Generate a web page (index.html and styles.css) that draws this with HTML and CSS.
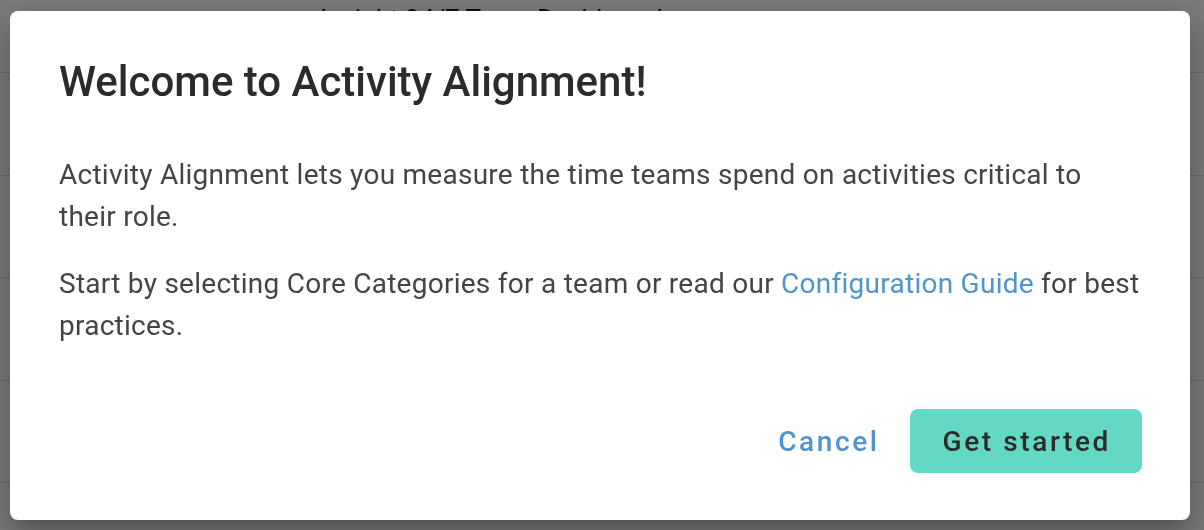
FILE: index.html
```html
<!DOCTYPE html>
<html>
<head>
<meta charset="utf-8">
<link rel="stylesheet" href="styles.css">
</head>
<body>
<div class="page">
  <div class="page-title">Insight 24/7 Team Dashboard</div>
  <div class="row"></div>
  <div class="row"></div>
  <div class="row"></div>
  <div class="row"></div>
  <div class="row-text">
    <span>Idle</span><span>Build</span><span>Handle</span><span>Black</span><span>Lib</span>
  </div>
</div>
<div class="overlay">
  <div class="dialog">
    <h2 class="dialog-title">Welcome to Activity Alignment!</h2>
    <div class="dialog-body">
      <p>Activity Alignment lets you measure the time teams spend on activities critical to their role.</p>
      <p>Start by selecting Core Categories for a team or read our <a class="link" href="#">Configuration Guide</a> for best practices.</p>
    </div>
    <div class="dialog-actions">
      <button class="btn btn-text">Cancel</button>
      <button class="btn btn-primary">Get started</button>
    </div>
  </div>
</div>
</body>
</html>
```

FILE: styles.css
```css
* { box-sizing: border-box; }
html, body {
  margin: 0;
  padding: 0;
  width: 1204px;
  height: 530px;
  overflow: hidden;
  font-family: Roboto, "Liberation Sans", sans-serif;
  background: #fff;
}
.page {
  width: 1204px;
  height: 530px;
  overflow: hidden;
}
.page-title {
  height: 73px;
  padding-left: 320px;
  padding-top: 4px;
  font-size: 26px;
  line-height: 30px;
  color: #222;
  border-bottom: 1px solid #ddd;
}
.row {
  height: 103px;
  border-bottom: 1px solid #ddd;
}
.row:nth-child(3), .row:nth-child(5) { height: 102px; }
.row-text {
  display: flex;
  padding-top: 44px;
  font-size: 20px;
  line-height: 24px;
  color: #222;
}
.row-text span:nth-child(1) { margin-left: 426px; }
.row-text span:nth-child(2) { margin-left: 80px; }
.row-text span:nth-child(3) { margin-left: 205px; }
.row-text span:nth-child(4) { margin-left: 90px; }
.row-text span:nth-child(5) { margin-left: 80px; }
.overlay {
  position: fixed;
  inset: 0;
  background: rgba(0, 0, 0, 0.52);
  display: flex;
  align-items: flex-start;
  justify-content: flex-start;
  padding: 11px 0 0 10px;
}
.dialog {
  width: 1180px;
  height: 509px;
  background: #fff;
  border-radius: 8px;
  padding: 0 48px 0 49px;
  box-shadow: 0 11px 15px -7px rgba(0,0,0,.2), 0 24px 38px 3px rgba(0,0,0,.14), 0 9px 46px 8px rgba(0,0,0,.12);
  display: flex;
  flex-direction: column;
}
.dialog-title {
  margin: 0;
  padding-top: 46px;
  font-size: 42px;
  font-weight: 500;
  line-height: 50px;
  color: #2b2b2b;
}
.dialog-body {
  padding-top: 47px;
}
.dialog-body p {
  margin: 0 0 25px 0;
  font-size: 28px;
  line-height: 42px;
  letter-spacing: 0.26px;
  color: #444;
}
.link {
  color: #4f94cd;
  text-decoration: none;
}
.dialog-actions {
  display: flex;
  justify-content: flex-end;
  align-items: center;
  gap: 30px;
  margin-top: 37px;
}
.btn {
  font-family: Roboto, "Liberation Sans", sans-serif;
  font-size: 28px;
  font-weight: 500;
  letter-spacing: 2.6px;
  border: none;
  cursor: pointer;
}
.btn-text {
  background: transparent;
  color: #4f94cd;
  padding: 0;
}
.btn-primary {
  height: 64px;
  padding: 0 31px 0 33px;
  background: #63d8c5;
  color: #2b2b2b;
  border-radius: 8px;
}
```
